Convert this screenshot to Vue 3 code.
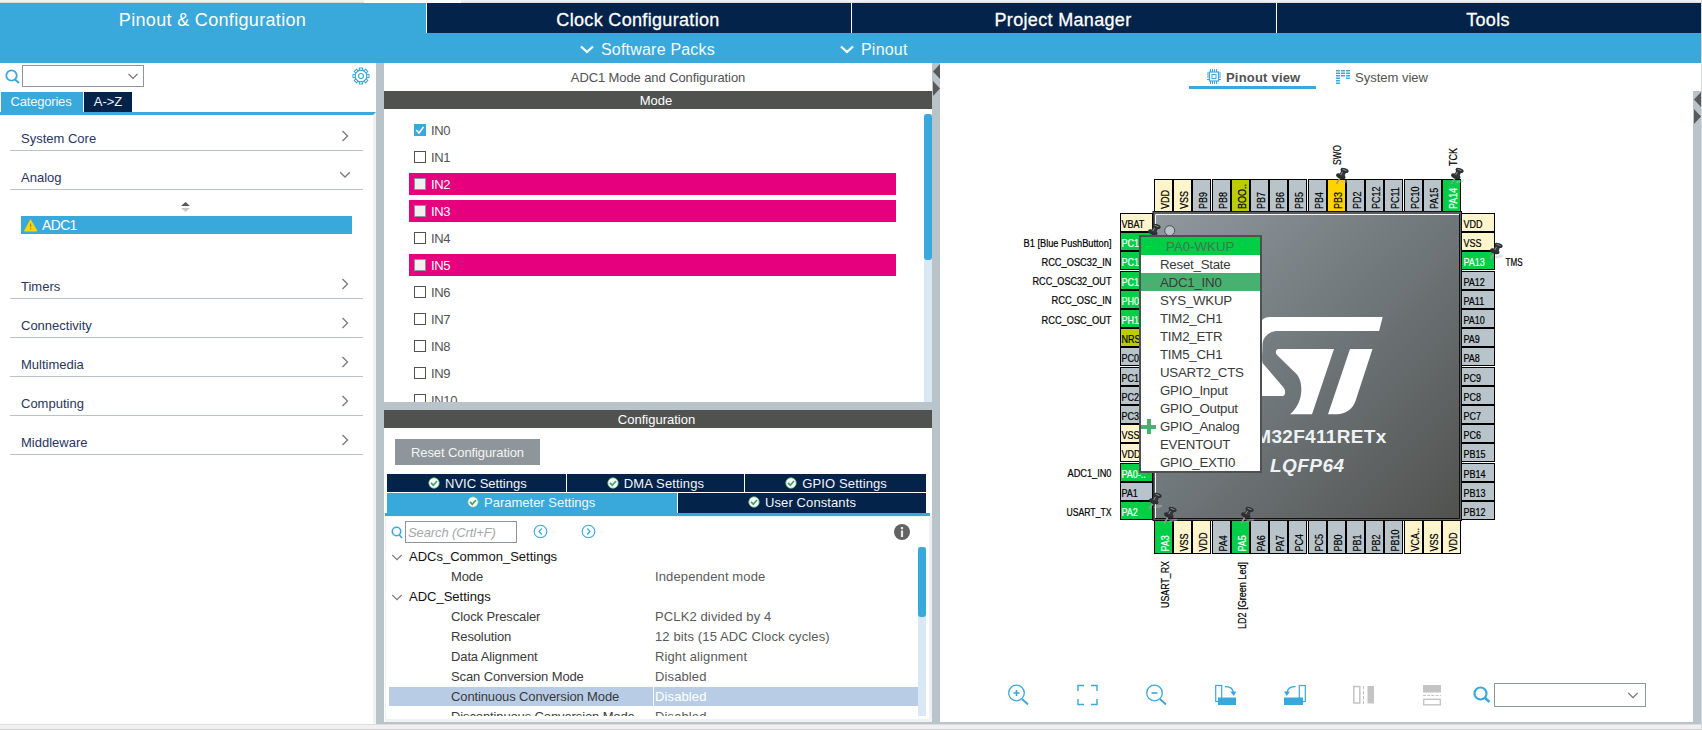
<script setup>
const mainTabs = ['Pinout & Configuration', 'Clock Configuration', 'Project Manager', 'Tools']

const categoriesTop = [
  { name: 'System Core', open: false },
  { name: 'Analog', open: true },
]
const categoriesBottom = ['Timers', 'Connectivity', 'Multimedia', 'Computing', 'Middleware']

const inputs = [
  { name: 'IN0', checked: true },
  { name: 'IN1' },
  { name: 'IN2', conflict: true },
  { name: 'IN3', conflict: true },
  { name: 'IN4' },
  { name: 'IN5', conflict: true },
  { name: 'IN6' },
  { name: 'IN7' },
  { name: 'IN8' },
  { name: 'IN9' },
  { name: 'IN10' },
]

const tabRows = [
  [
    { name: 'NVIC Settings', cls: 'nvic' },
    { name: 'DMA Settings', cls: 'dma' },
    { name: 'GPIO Settings', cls: 'gpio' },
  ],
  [
    { name: 'Parameter Settings', cls: 'param', active: true },
    { name: 'User Constants', cls: 'user' },
  ],
]

const params = [
  { group: 'ADCs_Common_Settings' },
  { name: 'Mode', value: 'Independent mode' },
  { group: 'ADC_Settings' },
  { name: 'Clock Prescaler', value: 'PCLK2 divided by 4' },
  { name: 'Resolution', value: '12 bits (15 ADC Clock cycles)' },
  { name: 'Data Alignment', value: 'Right alignment' },
  { name: 'Scan Conversion Mode', value: 'Disabled' },
  { name: 'Continuous Conversion Mode', value: 'Disabled', selected: true },
  { name: 'Discontinuous Conversion Mode', value: 'Disabled' },
]

// Pin kinds: g = assigned, p = power, o = system, y = partially assigned, n = free
const fills = { g: '#00ce46', p: '#fff5cc', o: '#bbcc01', y: '#ffd300', n: '#b9c4ca' }
const parse = (s) => s.split(' ').map((t) => ({ name: t.slice(2), fill: fills[t[0]], ink: t[0] === 'g' ? '#fff' : '#000' }))

const STEP = 19.2
const at = (origin, i) => Math.round(origin + STEP * i) + 0.5
const topPins = parse('p:VDD p:VSS n:PB9 n:PB8 o:BOO.. n:PB7 n:PB6 n:PB5 n:PB4 y:PB3 n:PD2 n:PC12 n:PC11 n:PC10 n:PA15 g:PA14')
const bottomPins = parse('g:PA3 p:VSS p:VDD n:PA4 g:PA5 n:PA6 n:PA7 n:PC4 n:PC5 n:PB0 n:PB1 n:PB2 n:PB10 p:VCA.. p:VSS p:VDD')
const leftPins = parse('p:VBAT g:PC1 g:PC1 g:PC1 g:PH0 g:PH1 o:NRS n:PC0 n:PC1 n:PC2 n:PC3 p:VSS p:VDD g:PA0-.. n:PA1 g:PA2')
const rightPins = parse('p:VDD p:VSS g:PA13 n:PA12 n:PA11 n:PA10 n:PA9 n:PA8 n:PC9 n:PC8 n:PC7 n:PC6 n:PB15 n:PB14 n:PB13 n:PB12')

const leftLabels = [
  { t: 'B1 [Blue PushButton]', y: 247, w: 88 },
  { t: 'RCC_OSC32_IN', y: 266, w: 70 },
  { t: 'RCC_OSC32_OUT', y: 285, w: 79 },
  { t: 'RCC_OSC_IN', y: 304, w: 60 },
  { t: 'RCC_OSC_OUT', y: 324, w: 70 },
  { t: 'ADC1_IN0', y: 477, w: 44 },
  { t: 'USART_TX', y: 516, w: 45 },
]
const verticalLabels = [
  { t: 'SWO', x: 1341, y: 165, w: 20 },
  { t: 'TCK', x: 1457, y: 166, w: 18 },
  { t: 'USART_RX', x: 1169, y: 608, w: 47 },
  { t: 'LD2 [Green Led]', x: 1246, y: 629, w: 67 },
]
const pushpins = [[1147, 223], [1335, 167], [1450, 167], [1489, 242], [1148, 492], [1163, 506], [1240, 506]]

const menu = ['Reset_State', 'ADC1_IN0', 'SYS_WKUP', 'TIM2_CH1', 'TIM2_ETR', 'TIM5_CH1', 'USART2_CTS', 'GPIO_Input', 'GPIO_Output', 'GPIO_Analog', 'EVENTOUT', 'GPIO_EXTI0']
const gearTeeth = Array.from({ length: 8 }, (_, i) => i * 45)
</script>

<template>
  <div class="app">
    <div class="window-top"><i></i></div>
    <nav class="main-tabs">
      <div v-for="(t, i) in mainTabs" :key="t" class="main-tab" :class="{ active: i === 0 }">{{ t }}</div>
    </nav>
    <div class="sub-bar">
      <div class="sub packs">
        <svg width="14" height="10" viewBox="0 0 14 10"><path d="M1 1.500 7 7l6-5.500" fill="none" stroke="#fff" stroke-width="2.300" /></svg>
        <span>Software Packs</span>
      </div>
      <div class="sub pinout">
        <svg width="14" height="10" viewBox="0 0 14 10"><path d="M1 1.500 7 7l6-5.500" fill="none" stroke="#fff" stroke-width="2.300" /></svg>
        <span>Pinout</span>
      </div>
    </div>

    <main class="body">
      <aside class="left">
        <div class="search-row">
          <svg class="mag" width="16" height="16" viewBox="0 0 16 16"><circle cx="6.500" cy="6.500" r="5.200" fill="none" stroke="#39a9dc" stroke-width="1.800" /><path d="M10 10.500 14 14" stroke="#39a9dc" stroke-width="2" /></svg>
          <div class="combo small">
            <svg width="12" height="7" viewBox="0 0 12 7"><path d="M1.500 .8 6 5.300l4.500-4.500" fill="none" stroke="#707070" stroke-width="1.200" /></svg>
          </div>
          <svg class="gear" width="18" height="18" viewBox="-9 -9 18 18">
            <circle r="6" fill="none" stroke="#39a9dc" stroke-width="1.300" />
            <rect v-for="a in gearTeeth" :key="a" x="-1.600" y="-8" width="3.200" height="2.200" fill="#fff" stroke="#39a9dc" stroke-width="1" :transform="`rotate(${a})`" />
            <circle r="2.500" fill="none" stroke="#39a9dc" stroke-width="1.200" />
          </svg>
        </div>
        <div class="cat-tabs">
          <div class="cat-tab active">Categories</div>
          <div class="cat-tab az">A-&gt;Z</div>
        </div>
        <div class="cat-body">
          <div v-for="c in categoriesTop" :key="c.name" class="cat">
            <span>{{ c.name }}</span>
            <svg width="12" height="12" viewBox="0 0 12 12"><path :d="c.open ? 'M1.200 3.200 6 8l4.800-4.800' : 'M3.500 1l5 5-5 5'" fill="none" stroke="#7a7a7a" stroke-width="1.300" /></svg>
          </div>
          <div class="group">
            <svg class="sorter" width="9" height="10" viewBox="0 0 9 10"><path d="M0 4h9L4.500 0z" fill="#58595b" /><path d="M0 6h9L4.500 10z" fill="#c8c8c8" /></svg>
            <div class="periph">
              <svg width="14" height="13" viewBox="0 0 14 13"><path d="M6.500.8 13 12H.5z" fill="#ffd300" stroke="#ffd300" stroke-linejoin="round" /><path d="M6.700 4.500v3.800M6.700 9.300v1.300" stroke="#8a7a20" stroke-width="1" /></svg>
              <span>ADC1</span>
            </div>
          </div>
          <div v-for="c in categoriesBottom" :key="c" class="cat">
            <span>{{ c }}</span>
            <svg width="12" height="12" viewBox="0 0 12 12"><path d="M3.500 1l5 5-5 5" fill="none" stroke="#7a7a7a" stroke-width="1.300" /></svg>
          </div>
        </div>
      </aside>

      <div class="splitter"></div>

      <section class="center">
        <div class="panel-title">ADC1 Mode and Configuration</div>
        <div class="bar mode-bar">Mode</div>
        <div class="mode-body">
          <ul class="inputs">
            <li v-for="n in inputs" :key="n.name" :class="{ conflict: n.conflict }">
              <i class="box" :class="{ checked: n.checked }">
                <svg v-if="n.checked" width="12" height="12" viewBox="0 0 12 12"><path d="M2.300 6 5 9l4.500-6" fill="none" stroke="#fff" stroke-width="1.500" /></svg>
              </i>
              <span>{{ n.name }}</span>
            </li>
          </ul>
          <div class="track mode-track"><i></i></div>
        </div>
        <div class="hsplit"></div>
        <div class="bar conf-bar">Configuration</div>
        <div class="conf-body">
          <div class="reset">Reset Configuration</div>
          <div class="conf-tabs">
            <div v-for="(row, r) in tabRows" :key="r" class="conf-row">
              <div v-for="t in row" :key="t.name" class="conf-tab" :class="[t.cls, { active: t.active }]">
                <svg width="12" height="12" viewBox="0 0 12 12"><circle cx="6" cy="6" r="5.200" fill="#fff" stroke="#6cc08b" stroke-width=".8" /><path d="M3 5.800 5.300 8.200 9 4" fill="none" stroke="#3aa863" stroke-width="1.700" /></svg>
                <span>{{ t.name }}</span>
              </div>
            </div>
          </div>
          <div class="conf-line"></div>
          <div class="conf-frame">
            <div class="find">
              <svg class="fmag" width="12" height="13" viewBox="0 0 12 13"><circle cx="5.500" cy="5.500" r="4.200" fill="none" stroke="#39a9dc" stroke-width="1.600" /><path d="M8.200 8.800 11 12" stroke="#39a9dc" stroke-width="1.600" /></svg>
              <div class="find-input">Search (Crtl+F)</div>
              <svg class="nav-prev" width="15" height="15" viewBox="0 0 15 15"><circle cx="7.500" cy="7.500" r="6.300" fill="none" stroke="#39a9dc" stroke-width="1.100" /><path d="M8.700 4.500 6 7.500l2.700 3" fill="none" stroke="#39a9dc" stroke-width="1.200" /></svg>
              <svg class="nav-next" width="15" height="15" viewBox="0 0 15 15"><circle cx="7.500" cy="7.500" r="6.300" fill="none" stroke="#39a9dc" stroke-width="1.100" /><path d="M6.300 4.500 9 7.500l-2.700 3" fill="none" stroke="#39a9dc" stroke-width="1.200" /></svg>
              <svg class="info" width="16" height="16" viewBox="0 0 16 16"><circle cx="8" cy="8" r="8" fill="#636363" /><path d="M8 3v2.200M8 6.500V13" stroke="#e8e8e8" stroke-width="2.200" /></svg>
            </div>
            <div class="tree-wrap">
              <div class="tree">
                <div v-for="(p, i) in params" :key="i" class="trow" :class="{ selected: p.selected, group: p.group }">
                  <template v-if="p.group">
                    <svg width="12" height="7" viewBox="0 0 12 7"><path d="M1.200 .8 6 5.600l4.800-4.800" fill="none" stroke="#7a7a7a" stroke-width="1.200" /></svg>
                    <span>{{ p.group }}</span>
                  </template>
                  <template v-else>
                    <span class="pname">{{ p.name }}</span>
                    <span class="pval">{{ p.value }}</span>
                  </template>
                </div>
              </div>
              <div class="track tree-track"><i></i></div>
            </div>
          </div>
        </div>
      </section>

      <div class="splitter mid">
        <svg width="8" height="32" viewBox="0 0 8 32"><path d="M8 0v15L1 7.500zM1 17v15l7-7.500z" fill="#58595b" /></svg>
      </div>

      <section class="right">
        <div class="view-tabs">
          <div class="view pin-view">
            <svg width="14" height="15" viewBox="0 0 14 15">
              <g stroke="#39a9dc" fill="none"><rect x="2.500" y="3" width="9" height="9" stroke-width="1.200" /><rect x="5" y="5.500" width="4" height="4" stroke-width="1" />
                <path d="M3.500 0v3M5.500 0v3M7.500 0v3M9.500 0v3M3.500 12v3M5.500 12v3M7.500 12v3M9.500 12v3M0 4h2.500M0 6h2.500M0 8h2.500M0 10.500h2.500M11.500 4H14M11.500 6H14M11.500 8H14M11.500 10.500H14" stroke-width="1" /></g>
            </svg>
            <span>Pinout view</span>
          </div>
          <div class="view sys-view">
            <svg width="14" height="14" viewBox="0 0 14 14"><g stroke="#39a9dc" stroke-width="4" stroke-dasharray="1.400 1.100"><path d="M2 0v14M7 0v7.500M12 0v10" /></g></svg>
            <span>System view</span>
          </div>
        </div>
        <div class="right-main">
          <div class="work">
            <div class="stage">
              <svg class="chip" width="753" height="569" viewBox="940 91 753 569">
                <defs>
                  <linearGradient id="body" x1="0" y1="0" x2="1" y2="1"><stop offset="0" stop-color="#90989d" /><stop offset=".45" stop-color="#72797d" /><stop offset="1" stop-color="#50524f" /></linearGradient>
                  <g id="pushpin">
                    <ellipse cx="10" cy="14.500" rx="4.500" ry="1.400" fill="#bbb" opacity=".45" transform="rotate(-14 10 14.500)" />
                    <path d="M1.300 17 4.800 11.500" stroke="#9a9a9a" stroke-width="1.500" />
                    <ellipse cx="5.800" cy="9.300" rx="4.900" ry="2.500" fill="#2c2e2f" transform="rotate(20 5.800 9.300)" />
                    <path d="M6.200 3.500 11 5.500 9 10.500 4.200 8.500z" fill="#35383a" />
                    <ellipse cx="9.600" cy="3.400" rx="4.200" ry="2.200" fill="#2c2e2f" transform="rotate(20 9.600 3.400)" />
                    <path d="M5.700 8 7.600 4.800M7.500 2.300l4 1.400" stroke="#8f9395" stroke-width="1" fill="none" />
                  </g>
                </defs>

                <g stroke="#000" stroke-width="1">
                  <rect v-for="(p, i) in topPins" :key="'t' + i" :x="at(1154, i)" y="179.500" width="18" height="32" :fill="p.fill" />
                  <rect v-for="(p, i) in bottomPins" :key="'b' + i" :x="at(1154, i)" y="520.500" width="18" height="33" :fill="p.fill" />
                  <rect v-for="(p, i) in leftPins" :key="'l' + i" x="1120.500" :y="at(213, i)" width="32" height="18" :fill="p.fill" />
                  <rect v-for="(p, i) in rightPins" :key="'r' + i" x="1461.500" :y="at(213, i)" width="33" height="18" :fill="p.fill" />
                </g>

                <rect x="1153" y="211.500" width="308.500" height="309" fill="#5a5d5f" stroke="#111" />
                <rect x="1155.500" y="214.500" width="304" height="304" fill="url(#body)" />
                <path d="M1155.500 518V214.500H1459" fill="none" stroke="#f4f6f7" />
                <path d="M1459.500 214V518.500H1155" fill="none" stroke="#111" />
                <circle cx="1169.700" cy="230.700" r="5" fill="#b9c4ca" stroke="#4a4d4f" />

                <g fill="#fff">
                  <path d="M1250 396 1262 320q3-3 8-3h112.700l-3.600 14H1278c-10 0-15.500 7-15.500 14 0 8-1 12 0 18l21 24.500c2.500 3 2 8.500-1 8.500z" />
                  <path d="M1278 349h56l-22 65.200h-22c13-10 14.500-31 6.500-40.200L1277 355c-1.800-2.500-1.500-5 1-6z" />
                  <path d="M1350 349h22.500l-17 52c-3 8.500-10.500 13.200-18.500 13.200h-9z" />
                </g>
                <g class="chip-name" fill="#eff2f4" text-anchor="middle">
                  <text x="1308.300" y="443" textLength="156">STM32F411RETx</text>
                  <text x="1307" y="471.700" textLength="74" font-style="italic">LQFP64</text>
                </g>

                <g class="pin-text">
                  <text v-for="(p, i) in leftPins" :key="'lt' + i" :transform="`translate(1121.500 ${at(213, i) + 14.500}) scale(.9 1)`" :fill="p.ink" :stroke="p.ink">{{ p.name }}</text>
                  <text v-for="(p, i) in rightPins" :key="'rt' + i" :transform="`translate(1463.500 ${at(213, i) + 14.500}) scale(.9 1)`" :fill="p.ink" :stroke="p.ink">{{ p.name }}</text>
                  <text v-for="(p, i) in topPins" :key="'tt' + i" :transform="`translate(${at(1154, i) + 14.500} 209) rotate(-90) scale(.9 1)`" :fill="p.ink" :stroke="p.ink">{{ p.name }}</text>
                  <text v-for="(p, i) in bottomPins" :key="'bt' + i" :transform="`translate(${at(1154, i) + 14.500} 551.500) rotate(-90) scale(.9 1)`" :fill="p.ink" :stroke="p.ink">{{ p.name }}</text>
                  <g fill="#000" stroke="#000">
                    <text v-for="l in leftLabels" :key="l.t" :x="1111.500 - l.w" :y="l.y" :textLength="l.w" lengthAdjust="spacingAndGlyphs">{{ l.t }}</text>
                    <text x="1505.500" y="266" textLength="17" lengthAdjust="spacingAndGlyphs">TMS</text>
                    <text v-for="l in verticalLabels" :key="l.t" :transform="`translate(${l.x} ${l.y}) rotate(-90)`" :textLength="l.w" lengthAdjust="spacingAndGlyphs">{{ l.t }}</text>
                  </g>
                </g>
                <use v-for="(p, i) in pushpins" :key="'pp' + i" href="#pushpin" :x="p[0]" :y="p[1]" />
              </svg>

              <div class="menu">
                <div class="menu-head">PA0-WKUP</div>
                <div v-for="m in menu" :key="m" class="menu-item" :class="{ hot: m === 'ADC1_IN0' }">
                  <i v-if="m === 'GPIO_Analog'" class="plus"></i>{{ m }}
                </div>
              </div>
            </div>

            <div class="toolbar">
              <div class="tool"><svg width="22" height="22" viewBox="0 0 22 22"><g fill="none" stroke="#39a9dc" stroke-width="1.300"><circle cx="8.500" cy="9" r="7.800" /><path d="M14 15l6 5.500" stroke-width="1.800" /><path d="M5.500 9h6M8.500 6v6" stroke-width="1.600" /></g></svg></div>
              <div class="tool"><svg width="22" height="22" viewBox="0 0 22 22"><path d="M1 7V1.500h6M14 1.500h6V7M20 15v5.500h-6M7 20.500H1V15" fill="none" stroke="#39a9dc" stroke-width="1.400" /></svg></div>
              <div class="tool"><svg width="22" height="22" viewBox="0 0 22 22"><g fill="none" stroke="#39a9dc" stroke-width="1.300"><circle cx="8.500" cy="9" r="7.800" /><path d="M14 15l6 5.500" stroke-width="1.800" /><path d="M5.500 9h6" stroke-width="1.600" /></g></svg></div>
              <div class="tool"><svg width="22" height="22" viewBox="0 0 22 22"><rect x=".7" y="1.500" width="6" height="16" fill="none" stroke="#39a9dc" stroke-width="1.200" /><rect x="3" y="13.500" width="18" height="7.500" fill="#39a9dc" /><path d="M10 2.500c5 0 8 2.500 8.500 6" fill="none" stroke="#39a9dc" stroke-width="1.500" /><path d="M15.300 7.500h6L18.800 12z" fill="#39a9dc" /></svg></div>
              <div class="tool"><svg width="22" height="22" viewBox="0 0 22 22"><rect x="15.300" y="1.500" width="6" height="16" fill="none" stroke="#39a9dc" stroke-width="1.200" /><rect x="0" y="13.500" width="19" height="7.500" fill="#39a9dc" /><path d="M11.500 2.500c-5 0-8 2.500-8.500 6" fill="none" stroke="#39a9dc" stroke-width="1.500" /><path d="M0 7.500h6L2.700 12z" fill="#39a9dc" /></svg></div>
              <div class="tool"><svg width="22" height="22" viewBox="0 0 22 22"><rect x=".8" y="2.500" width="6" height="16.500" fill="none" stroke="#c4c4c4" stroke-width="1.500" /><path d="M10.500 2v18" stroke="#c4c4c4" stroke-dasharray="3.500 1.500" /><rect x="14.500" y="2" width="6.500" height="17.500" fill="#c4c4c4" /></svg></div>
              <div class="tool last"><svg width="22" height="22" viewBox="0 0 22 22"><rect x="1" y="1" width="18" height="7.500" fill="#c4c4c4" /><path d="M1 11.500h18" stroke="#c4c4c4" stroke-dasharray="3 1.200" /><rect x="1.700" y="15.300" width="16.600" height="5.500" fill="none" stroke="#c4c4c4" stroke-width="1.400" /></svg></div>
              <svg class="tmag" width="18" height="18" viewBox="0 0 18 18"><circle cx="7.500" cy="7.500" r="6" fill="none" stroke="#39a9dc" stroke-width="2.200" /><path d="M11.500 11.500 16.500 16" stroke="#39a9dc" stroke-width="2.600" /></svg>
              <div class="combo big">
                <svg width="12" height="7" viewBox="0 0 12 7"><path d="M1.200 .8 6 5.600l4.800-4.800" fill="none" stroke="#707070" stroke-width="1.200" /></svg>
              </div>
            </div>
          </div>
          <div class="splitter far">
            <svg width="8" height="32" viewBox="0 0 8 32"><path d="M8 0v15L1 7.500zM1 17v15l7-7.500z" fill="#58595b" /></svg>
          </div>
        </div>
      </section>
    </main>
    <footer class="footer"><i></i></footer>
  </div>
</template>

<style>
html, body { margin: 0; overflow: hidden; background: #f0f0f0; }
</style>

<style scoped>
.app {
  box-sizing: border-box;
  width: 1702px;
  height: 730px;
  display: flex;
  flex-direction: column;
  border-right: 1px solid #d6d9db;
  background: #fff;
  font: 13px/16px "Liberation Sans", Arial, sans-serif;
  color: #525252;
  overflow: hidden;
}
.app *, .app *::before { box-sizing: border-box; }
svg { display: block; flex: none; }
i { display: block; flex: none; }

.window-top { height: 3px; background: #f0f0f0; border-bottom: 1px solid #dcdcdc; flex: none; }
.window-top i { width: 97px; height: 3px; margin-left: 364px; background: #fff; }

.main-tabs { display: grid; grid-template-columns: 426px 425px 425px 1fr; height: 30px; flex: none; background: #03234b; }
.main-tab { border-left: 1px solid #fff; color: #fff; text-align: center; font-size: 18px; line-height: 34px; height: 30px; padding-right: 2px; letter-spacing: .33px; -webkit-text-stroke: .3px #fff; }
.main-tab.active { background: #39a9dc; border-left: 0; padding-right: 1px; -webkit-text-stroke: 0; }

.sub-bar { height: 30px; flex: none; display: flex; background: #39a9dc; color: #f4f9fc; font-size: 16px; line-height: 34px; letter-spacing: .2px; }
.sub { display: flex; gap: 7px; }
.sub svg { margin-top: 12px; }
.packs { margin-left: 580px; width: 260px; }

.body { display: flex; height: 661px; flex: none; }

.left { width: 376px; display: flex; flex-direction: column; }
.search-row { height: 29px; display: flex; padding-left: 5px; }
.mag { margin-top: 6px; }
.combo { border: 1px solid #8f969b; display: flex; align-items: center; justify-content: flex-end; background: #fff; }
.combo.small { width: 122px; height: 22px; margin: 2px 0 0 1px; padding-right: 4px; }
.gear { margin: 4px 0 0 208px; }
.cat-tabs { display: flex; gap: 1px; padding-left: 1px; height: 20px; }
.cat-tab { background: #03234b; color: #f4f6f8; width: 48px; height: 20px; text-align: center; line-height: 20px; }
.cat-tab.active { background: #39a9dc; width: 82px; padding-right: 2px; letter-spacing: -.2px; }
.cat-body { flex: 1; border-top: 3px solid #39a9dc; border-right: 3px solid #eff2f4; padding: 0 10px; }
.cat { height: 39px; width: 353px; border-bottom: 1px solid #b9c4ca; padding: 19px 12px 0 11px; display: flex; justify-content: space-between; color: #2a3560; }
.cat svg { margin-top: -1px; }
.cat:first-child { margin-top: -3px; }
.group { height: 70px; padding: 12px 0 0 11px; }
.sorter { margin-left: 160px; }
.periph { margin-top: 4px; width: 331px; height: 18px; background: #39a9dc; color: #fff; display: flex; gap: 4px; padding-left: 3px; line-height: 18px; font-size: 14px; letter-spacing: -.65px; }
.periph svg { margin-top: 3px; }

.splitter { width: 8px; background: #b9c4ca; flex: none; }
.splitter.mid, .splitter.far { padding-top: 1px; }

.center { width: 548px; display: flex; flex-direction: column; }
.panel-title { height: 28px; text-align: center; line-height: 30px; letter-spacing: -.1px; }
.bar { height: 18px; flex: none; background: #505250; color: #fff; text-align: center; line-height: 19px; padding-right: 4px; }
.mode-body { height: 293px; display: flex; flex: none; overflow: hidden; }
.inputs { list-style: none; margin: 0; padding: 10px 0 0 25px; width: 540px; }
.inputs li { width: 487px; height: 22px; margin-bottom: 5px; padding-left: 5px; display: flex; align-items: center; gap: 5px; letter-spacing: -.35px; }
.inputs li span { padding-top: 2px; }
.inputs li.conflict { background: #e6007e; color: #fff; }
.box { width: 12px; height: 12px; border: 1px solid #525252; background: #fff; }
.box.checked { border: 0; background: #39a9dc; }
.conflict .box { background: #f0f0f0; border-color: #8f969b; }
.track { width: 8px; background: #d9e8f5; }
.track i { width: 8px; background: #39a9dc; border-radius: 3px; }
.mode-track { margin-top: 5px; }
.mode-track i { height: 146px; }
.hsplit { height: 8px; flex: none; background: #b9c4ca; }
.conf-bar { padding-right: 3px; }

.conf-body { flex: 1; display: flex; flex-direction: column; border-bottom: 2px solid #b9c4ca; }
.reset { margin: 11px 0 0 11px; width: 145px; height: 26px; background: #8f969b; color: #f2f4f5; text-align: center; line-height: 27px; letter-spacing: -.1px; }
.conf-tabs { margin: 9px 0 0 3px; width: 539px; display: flex; flex-direction: column; gap: 1px; }
.conf-row { display: flex; gap: 1px; }
.conf-tab { height: 18px; background: #03234b; color: #f4f6f8; display: flex; gap: 5px; line-height: 20px; }
.conf-row:last-child .conf-tab { height: 20px; }
.conf-tab svg { margin-top: 3px; }
.conf-tab.active { background: #39a9dc; }
.nvic { width: 179px; padding-left: 41px; }
.dma { width: 178px; padding-left: 40px; letter-spacing: .15px; }
.gpio { width: 181px; padding-left: 40px; letter-spacing: .12px; }
.param { width: 290px; padding-left: 80px; }
.user { width: 248px; padding-left: 70px; letter-spacing: .1px; }
.conf-line { height: 3px; margin: 0 2px 0 1px; background: #39a9dc; }
.conf-frame { flex: 1; margin-left: 1px; border: solid #eff2f4; border-width: 1px 3px 3px 1px; display: flex; flex-direction: column; }
.find { display: flex; height: 30px; padding-left: 5px; }
.fmag { margin-top: 9px; }
.find-input { width: 112px; height: 22px; margin: 4px 0 0 2px; border: 1px solid #8f969b; padding-left: 2px; color: #a4a8ab; font-style: italic; line-height: 21px; white-space: nowrap; letter-spacing: -.1px; }
.nav-prev { margin: 7px 0 0 16px; }
.nav-next { margin: 7px 0 0 33px; }
.info { margin: 7px 0 0 298px; }
.tree-wrap { display: flex; height: 169px; padding-left: 3px; }
.tree { width: 529px; overflow: hidden; color: #3a3a3a; }
.trow { height: 20px; display: flex; line-height: 19px; }
.trow.group { color: #111; height: 20px; padding: 0 0 0 2px; gap: 6px; }
.trow.group svg { margin-top: 7px; }
.pname { width: 265px; padding-left: 62px; white-space: nowrap; height: 19px; letter-spacing: -.12px; }
.pval { color: #5a5a5a; flex: 1; padding-left: 1px; height: 19px; letter-spacing: .12px; }
.selected .pname { background: #b8cde5; width: 264px; margin-right: 1px; }
.selected .pval { background: #b8cde5; color: #fff; }
.tree-track i { height: 70px; }

.right { width: 761px; display: flex; flex-direction: column; }
.view-tabs { height: 28px; display: flex; }
.view { display: flex; height: 26px; }
.pin-view { margin-left: 249px; width: 127px; padding-left: 18px; gap: 5px; border-bottom: 3px solid #39a9dc; font-weight: bold; letter-spacing: .2px; line-height: 29px; }
.pin-view svg { margin-top: 6px; }
.sys-view { padding-left: 20px; gap: 5px; line-height: 29px; }
.sys-view svg { margin-top: 7px; }
.right-main { flex: 1; display: flex; }
.work { width: 753px; display: flex; flex-direction: column; border-bottom: 2px solid #b9c4ca; }
.stage { position: relative; height: 569px; }
.pin-text { font-size: 10px; stroke-width: .2px; }
.chip-name { font-size: 19px; font-weight: bold; }

.menu { position: absolute; left: 199px; top: 144px; width: 123px; height: 238px; border: 2px solid #4f5150; background: #fff; color: #3a3a3a; font-size: 13.300px; line-height: 18px; letter-spacing: -.25px; }
.menu-head { background: #00ce46; color: #44764f; padding-left: 25px; height: 18px; line-height: 19px; letter-spacing: 0; }
.menu-item { position: relative; height: 18px; padding-left: 19px; line-height: 19px; }
.menu-item.hot { background: #49b170; }
.plus { position: absolute; left: 0; top: 2px; width: 15px; height: 15px; background: linear-gradient(#49b170, #49b170) center / 15px 4px no-repeat, linear-gradient(#49b170, #49b170) center / 4px 15px no-repeat; }

.toolbar { display: flex; padding-left: 68px; height: 60px; }
.tool { width: 69px; padding-top: 24px; }
.tool.last { width: 51px; }
.tmag { margin-top: 26px; }
.combo.big { width: 152px; height: 24px; margin: 23px 0 0 3px; padding-right: 6px; }

.footer { flex: 1; background: #f0f0f0; border-top: 1px solid #dcdcdc; }
.footer i { height: 1px; margin-top: 4px; background: #d2d2d2; }
</style>
